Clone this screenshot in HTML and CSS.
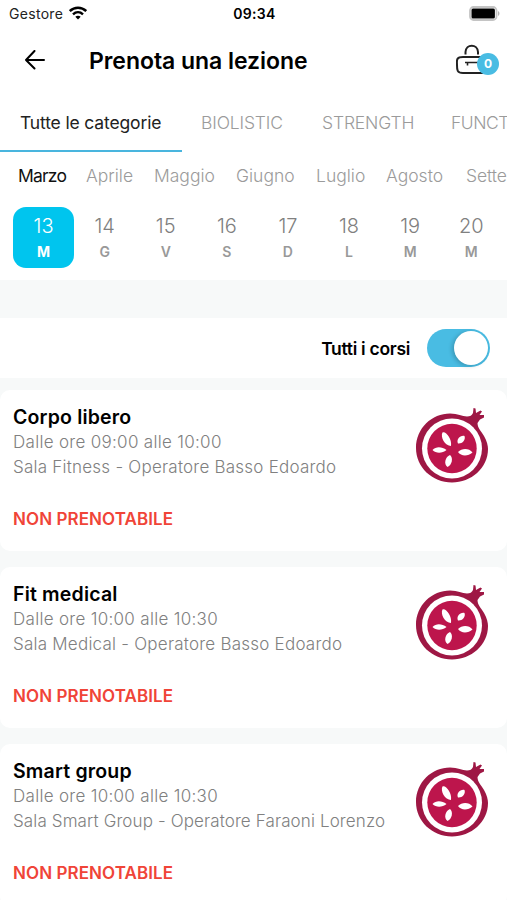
FILE: index.html
```html
<!DOCTYPE html>
<html lang="it">
<head>
    <meta charset="UTF-8">
    <meta name="viewport" content="width=device-width, initial-scale=1.0">
    <title>Prenota una lezione</title>
    <link rel="stylesheet" href="styles.css">
</head>
<body>
    <!-- shared logo, used by every course card -->
    <svg class="defs" width="0" height="0">
        <symbol id="pomegranate" viewBox="0 0 76 78">
            <path fill="#9e1744" d="M36 5.500C44 5.500 48 8.500 53 8.500C56 8.500 58 7.500 59 5L59.500 0L61.500 0.500L62 5L66.500 2.500L68 3.500L65.500 7L70 7L70 9.500L66 11.500L63.500 15C63.500 20 67 23 70 28C73 33 74 38 74 41C74 60 57 74.500 38 74.500C18 74.500 2 59 2 40C2 20 18 5.500 36 5.500Z"/>
            <circle cx="38" cy="40.500" r="30" fill="#fff"/>
            <circle cx="38" cy="40.500" r="24.700" fill="#bd154c"/>
            <g fill="#fff">
                <path d="M28.500 24.500C32 23 38 31 37 38C31 38 26 29 28.500 24.500Z"/>
                <path d="M50.500 28C52 32 48 36 44 35.500C42 32 46 27 50.500 28Z"/>
                <path d="M18.500 42C22 38 28 38.500 32.500 42C28 45.500 22 45.500 18.500 42Z"/>
                <path d="M44 44C48 40 55 40 58.500 44.500C54 48.500 47 48.500 44 44Z"/>
                <path d="M36 47C39.500 50 38 57 33.500 59C29.500 56 31 49 36 47Z"/>
            </g>
        </symbol>
    </svg>

    <div class="status-bar">
        <div class="carrier">
            <span>Gestore</span>
            <svg width="18" height="14" viewBox="0 0 18 14" fill="none" stroke="#000" stroke-width="2.400">
                <path d="M0.800 5C5.500 0.600 12.500 0.600 17.200 5"/>
                <path d="M4 8.300C7 5.500 11 5.500 14 8.300"/>
                <path d="M9 13.500L6.300 10.800C7.800 9.500 10.200 9.500 11.700 10.800Z" fill="#000" stroke="none"/>
            </svg>
        </div>
        <div class="clock">09:34</div>
        <svg class="battery" width="31" height="15" viewBox="0 0 31 15">
            <rect x="1" y="1" width="26.500" height="13" rx="3.500" fill="#fff" stroke="#c4c4c4" stroke-width="1.800"/>
            <rect x="2.500" y="2.500" width="23.400" height="10" rx="1.500" fill="#000"/>
            <path d="M29 5C31 6 31 9 29 10Z" fill="#b5b5b5"/>
        </svg>
    </div>

    <div class="header">
        <svg width="20" height="20" viewBox="0 0 20 20" fill="none" stroke="#000" stroke-width="2" stroke-linecap="round" stroke-linejoin="round">
            <path d="M19 10H1M9.500 1L1 10L9.500 18.500"/>
        </svg>
        <h1>Prenota una lezione</h1>
        <div class="locker">
            <svg width="32" height="32" viewBox="0 0 32 32" fill="none" stroke="#222" stroke-width="2">
                <path d="M9.500 10.500V8C10 -0.500 21.500 -0.500 22 8V10.500"/>
                <path d="M27 13H7C-0.500 13 1 17 1 21C1 26 1 29 7 29H27"/>
                <path d="M9 18.500H23M11.500 18.500V21.500" stroke-width="1.600"/>
            </svg>
            <span class="badge">0</span>
        </div>
    </div>

    <div class="tabs">
        <div class="tab active">Tutte le categorie</div>
        <div class="tab">BIOLISTIC</div>
        <div class="tab">STRENGTH</div>
        <div class="tab">FUNCT</div>
    </div>

    <div class="months">
        <span class="active">Marzo</span>
        <span>Aprile</span>
        <span>Maggio</span>
        <span>Giugno</span>
        <span>Luglio</span>
        <span>Agosto</span>
        <span>Sette</span>
    </div>

    <div class="days">
        <div class="day active">13<b>M</b></div>
        <div class="day">14<b>G</b></div>
        <div class="day">15<b>V</b></div>
        <div class="day">16<b>S</b></div>
        <div class="day">17<b>D</b></div>
        <div class="day">18<b>L</b></div>
        <div class="day">19<b>M</b></div>
        <div class="day">20<b>M</b></div>
    </div>

    <div class="filter">
        <span>Tutti i corsi</span>
        <div class="toggle"><div class="knob"></div></div>
    </div>

    <div class="courses">
        <div class="card">
            <div>
                <h2>Corpo libero</h2>
                <p class="time">Dalle ore 09:00 alle 10:00</p>
                <p>Sala Fitness - Operatore Basso Edoardo</p>
                <div class="state">NON PRENOTABILE</div>
            </div>
            <svg class="logo"><use href="#pomegranate"/></svg>
        </div>
        <div class="card">
            <div>
                <h2>Fit medical</h2>
                <p class="time">Dalle ore 10:00 alle 10:30</p>
                <p>Sala Medical - Operatore Basso Edoardo</p>
                <div class="state">NON PRENOTABILE</div>
            </div>
            <svg class="logo"><use href="#pomegranate"/></svg>
        </div>
        <div class="card">
            <div>
                <h2>Smart group</h2>
                <p class="time">Dalle ore 10:00 alle 10:30</p>
                <p class="long">Sala Smart Group - Operatore Faraoni Lorenzo</p>
                <div class="state">NON PRENOTABILE</div>
            </div>
            <svg class="logo"><use href="#pomegranate"/></svg>
        </div>
    </div>
</body>
</html>
```
FILE: styles.css
```css
* {
    box-sizing: border-box;
}
body {
    margin: 0;
    height: 900px;
    overflow: hidden;
    background-color: #f7f9f9;
    color: #000;
    font-family: "Inter", "Liberation Sans", sans-serif;
    white-space: nowrap;
}
.defs {
    display: block;
}
h1, h2, p {
    margin: 0;
}

/* status bar */
.status-bar {
    display: grid;
    grid-template-columns: 1fr 60px 1fr;
    align-items: center;
    height: 28px;
    padding: 0 7px 2px 9px;
    background-color: #fff;
    font-size: 14px;
}
.carrier {
    display: flex;
    align-items: center;
    gap: 6px;
    color: #222;
    letter-spacing: 0.3px;
}
.clock {
    text-align: center;
    font-weight: 600;
    letter-spacing: 0.3px;
}
.battery {
    justify-self: end;
}

/* header */
.header {
    display: flex;
    align-items: center;
    height: 66px;
    padding: 0 8px 2px 25px;
    background-color: #fff;
}
.header h1 {
    flex: 1;
    margin-left: 44px;
    padding-top: 2px;
    font-size: 23px;
    font-weight: 600;
    letter-spacing: -0.05px;
}
.locker {
    position: relative;
    width: 43px;
    height: 32px;
}
.badge {
    position: absolute;
    right: 0;
    top: 9px;
    width: 22px;
    height: 22px;
    border-radius: 50%;
    background-color: #49bce3;
    color: #fff;
    font-size: 12px;
    font-weight: 700;
    line-height: 22px;
    text-align: center;
}

/* categories */
.tabs {
    display: grid;
    grid-template-columns: 182px 121px 129px 75px;
    height: 59px;
    background-color: #fff;
    color: #9b9b9b;
    font-size: 17.5px;
    font-weight: 300;
    letter-spacing: -0.15px;
    line-height: 58px;
}
.tab {
    padding-left: 19px;
}
.tab:last-child {
    overflow: hidden;
    letter-spacing: -0.5px;
}
.tab.active {
    height: 58px;
    padding-left: 20px;
    border-bottom: 2px solid #49b5de;
    color: #222;
    font-weight: 400;
}

/* dates */
.months {
    display: grid;
    grid-template-columns: 48px 48px 62px 60px 50px 60px 41px;
    column-gap: 20px;
    height: 54px;
    padding-left: 18px;
    background-color: #fff;
    color: #9b9b9b;
    font-size: 17.5px;
    font-weight: 300;
    line-height: 45px;
}
.months .active {
    color: #111;
    font-weight: 400;
    letter-spacing: -0.8px;
}
.months span:last-child {
    overflow: hidden;
    letter-spacing: -0.1px;
}
.days {
    display: grid;
    grid-template-columns: repeat(8, 61.1px);
    height: 73px;
    padding-left: 13px;
    background-color: #fff;
    color: #808080;
}
.day {
    height: 61px;
    padding-top: 7px;
    border-radius: 13px;
    font-size: 20px;
    font-weight: 300;
    line-height: 25px;
    text-align: center;
}
.day b {
    display: block;
    color: #999;
    font-size: 14px;
    font-weight: 600;
}
.day.active {
    background-color: #00c5ee;
    color: #fff;
}
.day.active b {
    color: #fff;
    font-weight: 700;
}

/* filter */
.filter {
    display: flex;
    justify-content: flex-end;
    align-items: center;
    gap: 17px;
    height: 60px;
    margin-top: 38px;
    padding-right: 17px;
    background-color: #fff;
    font-size: 17.5px;
    font-weight: 600;
    letter-spacing: -0.3px;
}
.toggle {
    width: 63px;
    height: 38px;
    padding: 2px;
    border-radius: 19px;
    background-color: #49bce3;
}
.knob {
    width: 34px;
    height: 34px;
    margin-left: auto;
    border-radius: 50%;
    background-color: #fff;
    box-shadow: -2px 1px 4px rgba(0, 0, 0, 0.2);
}

/* courses */
.courses {
    display: grid;
    gap: 16px;
    margin-top: 12px;
}
.card {
    display: flex;
    justify-content: space-between;
    height: 161.200px;
    padding: 15px 17px 0 13px;
    border-radius: 10px;
    background-color: #fff;
    color: #808080;
    font-size: 17px;
    font-weight: 300;
    line-height: 25px;
    letter-spacing: 0.23px;
}
.card h2 {
    color: #000;
    font-size: 19.5px;
    font-weight: 600;
    line-height: 25px;
    letter-spacing: 0.18px;
}
.card .time {
    letter-spacing: 0.3px;
}
.card .long {
    letter-spacing: 0.12px;
}
.state {
    margin-top: 27px;
    color: #f04438;
    font-weight: 600;
    letter-spacing: 0.08px;
}
.logo {
    width: 76px;
    height: 78px;
    margin-top: 3px;
}
```
